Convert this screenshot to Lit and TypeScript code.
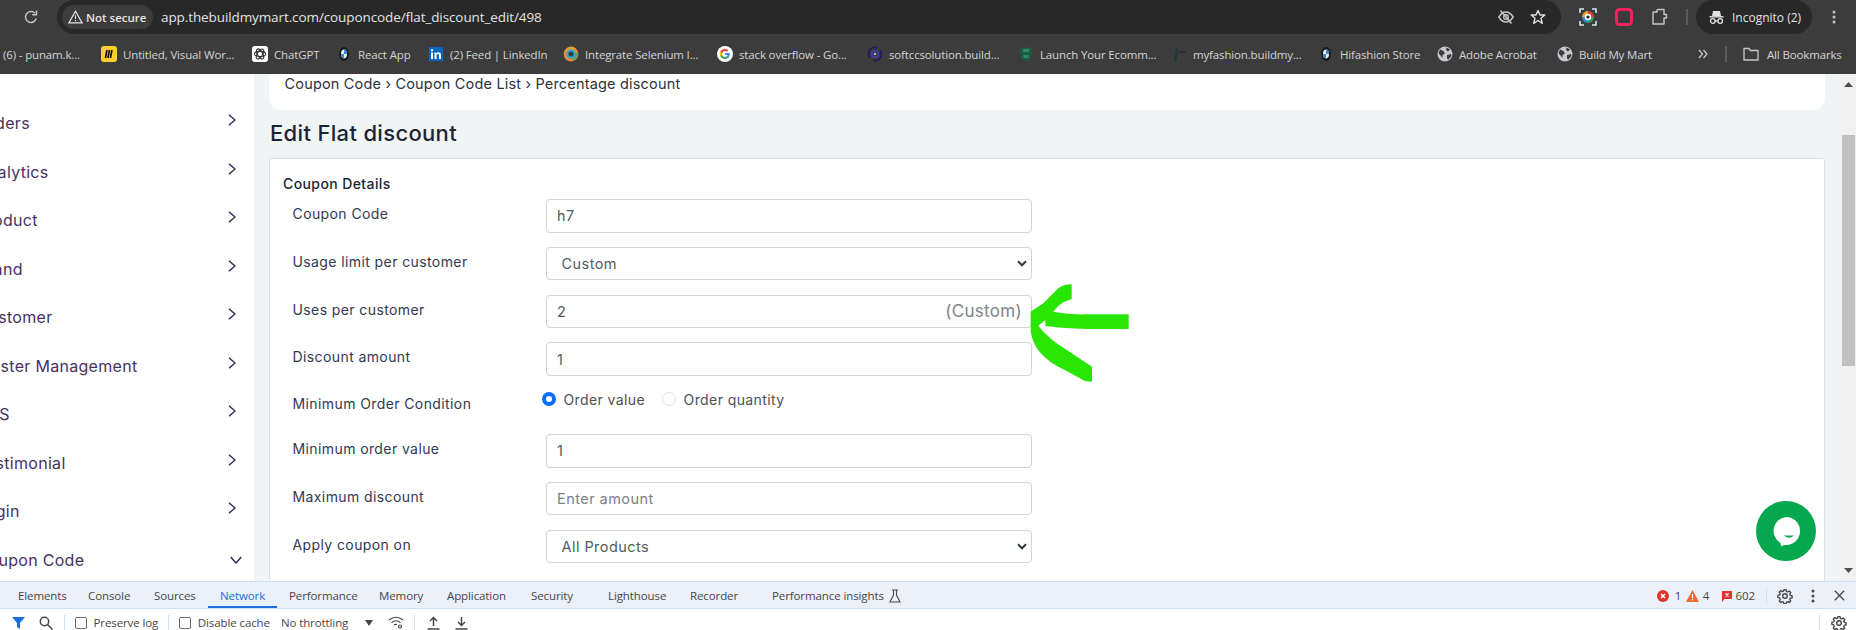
import { LitElement, css, html, svg } from "lit";
import { customElement } from "lit/decorators.js";

const BOOKMARKS = [
  { icon: "none", label: "(6) - punam.k...", w: 101 },
  { icon: "miro", label: "Untitled, Visual Wor...", w: 151 },
  { icon: "gpt", label: "ChatGPT", w: 84 },
  { icon: "bmw", label: "React App", w: 92 },
  { icon: "in", label: "(2) Feed | LinkedIn", w: 135 },
  { icon: "lens", label: "Integrate Selenium I...", w: 154 },
  { icon: "google", label: "stack overflow - Go...", w: 150 },
  { icon: "soft", label: "softccsolution.build...", w: 151 },
  { icon: "launch", label: "Launch Your Ecomm...", w: 153 },
  { icon: "fashion", label: "myfashion.buildmy...", w: 147 },
  { icon: "bmw", label: "Hifashion Store", w: 119 },
  { icon: "globe", label: "Adobe Acrobat", w: 120 },
  { icon: "globe", label: "Build My Mart", w: 130 },
];

const MENU = [
  { label: "Orders", shift: 0 },
  { label: "Analytics", shift: 0 },
  { label: "Product", shift: 0 },
  { label: "Brand", shift: 0 },
  { label: "Customer", shift: 0 },
  { label: "Master Management", shift: 0 },
  { label: "CMS", shift: 4 },
  { label: "Testimonial", shift: 0 },
  { label: "Login", shift: 0 },
];

const TABS = [
  { label: "Elements", w: 70 },
  { label: "Console", w: 66 },
  { label: "Sources", w: 66 },
  { label: "Network", w: 69, active: true },
  { label: "Performance", w: 90 },
  { label: "Memory", w: 68 },
  { label: "Application", w: 84 },
  { label: "Security", w: 77 },
  { label: "Lighthouse", w: 82 },
  { label: "Recorder", w: 82 },
];

function favicon(name: string) {
  switch (name) {
    case "miro":
      return html`<svg width="16" height="16" viewBox="0 0 16 16">
        <rect width="16" height="16" rx="3" fill="#ffd02f" />
        <path d="M6 4 4.400 12M8.500 4 6.900 12M11 4 9.400 12" stroke="#111" stroke-width="1.700" fill="none" />
      </svg>`;
    case "gpt":
      return html`<svg width="16" height="16" viewBox="0 0 16 16">
        <rect width="16" height="16" rx="3" fill="#fff" />
        <g fill="none" stroke="#333" stroke-width="1.1">
          <ellipse cx="8" cy="8" rx="5.6" ry="2.6" />
          <ellipse cx="8" cy="8" rx="5.6" ry="2.6" transform="rotate(60 8 8)" />
          <ellipse cx="8" cy="8" rx="5.6" ry="2.6" transform="rotate(120 8 8)" />
        </g>
      </svg>`;
    case "bmw":
      return html`<svg width="16" height="16" viewBox="0 0 16 16">
        <ellipse cx="8" cy="8" rx="4.8" ry="7" fill="#15181c" />
        <ellipse cx="8" cy="8" rx="3" ry="4.4" fill="#e8eef4" />
        <path d="M8 3.6A3 4.4 0 0 1 11 8H8ZM8 12.4A3 4.4 0 0 1 5 8H8Z" fill="#3f86c9" />
      </svg>`;
    case "in":
      return html`<svg width="16" height="16" viewBox="0 0 16 16">
        <rect x="1" y="1" width="14" height="14" fill="#0a66c2" />
        <path d="M3 6.4h2V13H3ZM3 3.2h2v2H3ZM6.5 6.4h1.9v1c.5-.8 1.2-1.2 2.2-1.2 1.6 0 2.4 1 2.4 2.8v4h-2V9.400c0-1-.3-1.500-1.100-1.500s-1.400.6-1.400 1.600V13h-2Z" fill="#fff" />
      </svg>`;
    case "lens":
      return html`<svg width="16" height="16" viewBox="0 0 16 16" fill="none">
        <circle cx="8" cy="8" r="7.400" fill="#e9893a" />
        <path d="M2 5A7 7 0 0 1 13 2.500L8 8Z" fill="#d9a13a" />
        <path d="M14.800 6.500A7 7 0 0 1 10 14.600L8 8Z" fill="#5aa469" />
        <circle cx="8" cy="8" r="4.600" fill="#2ba6c9" />
        <circle cx="8" cy="8" r="2.500" fill="#32394a" />
      </svg>`;
    case "google":
      return html`<svg width="16" height="16" viewBox="0 0 16 16">
        <circle cx="8" cy="8" r="8" fill="#fff" />
        <path d="M12.800 8.100c0-.4 0-.7-.1-1H8v1.900h2.700c-.1.600-.5 1.200-1 1.500v1.300h1.600c1-.9 1.500-2.200 1.500-3.700Z" fill="#4285f4" />
        <path d="M8 13c1.300 0 2.400-.4 3.300-1.200l-1.600-1.300c-.4.300-1 .5-1.700.5-1.300 0-2.400-.9-2.800-2H3.200v1.300A5 5 0 0 0 8 13Z" fill="#34a853" />
        <path d="M5.200 9c-.2-.6-.2-1.300 0-2V5.700H3.200a5 5 0 0 0 0 4.600Z" fill="#fbbc05" />
        <path d="M8 5c.7 0 1.400.3 1.900.7l1.400-1.400A5 5 0 0 0 3.200 5.700L5.200 7c.4-1.200 1.500-2 2.800-2Z" fill="#ea4335" />
      </svg>`;
    case "soft":
      return html`<svg width="16" height="16" viewBox="0 0 16 16" fill="none">
        <path d="M3 12A6.500 6.500 0 0 1 10 1.800M13 4A6.500 6.500 0 0 1 6 14.200" stroke="#231a63" stroke-width="1.800" />
        <circle cx="8" cy="8" r="3.200" stroke="#3a3fa8" stroke-width="1.600" />
        <circle cx="8" cy="8" r="1.100" fill="#c9cde8" />
      </svg>`;
    case "launch":
      return html`<svg width="16" height="16" viewBox="0 0 16 16">
        <path d="M3 1.500h10l2 3.500-2 3v4.500L8 15l-5-2.500V8L1 5Z" fill="#1f5a45" />
        <path d="M5 3h6v3H5ZM5.500 9h5v3h-5Z" fill="#2f8a66" />
      </svg>`;
    case "fashion":
      return html`<svg width="16" height="16" viewBox="0 0 16 16">
        <path d="M3 15 5 2l1.500 1L5.500 15Z" fill="#15393c" />
        <path d="M7 5h8v2H7Z" fill="#2b2f30" />
      </svg>`;
    case "globe":
      return html`<svg width="16" height="16" viewBox="0 0 16 16">
        <circle cx="8" cy="8" r="7.500" fill="#c7c9cc" />
        <path d="M3 3.500 6.500 5 8 7.500 5.500 9 5.500 12 3 9 1.500 7ZM9.500 1.500 13 3.500 11 5.500 9 4ZM10 9l4-1 .5 2-3.500 4-1-2Z" fill="#3c3c3c" />
      </svg>`;
    default:
      return null;
  }
}

const chevronRight = html`<svg class="chev" width="8" height="12" viewBox="0 0 8 12" fill="none">
  <path d="M1 .7 7 6 1 11.300" stroke="#3b2a57" stroke-width="1.500" />
</svg>`;

const selectArrow = html`<svg class="select-arrow" width="10" height="7" viewBox="0 0 10 7" fill="none">
  <path d="M1 1.300 5 5.300 9 1.300" stroke="#343a40" stroke-width="2" />
</svg>`;

const gear = (c: string) => svg`<svg width="16" height="16" viewBox="0 0 16 16" fill="none">
  <circle cx="8" cy="8" r="2.300" stroke=${c} stroke-width="1.400" />
  <path d="M6.800 1h2.400l.4 2 1.400.6 1.700-1.100 1.700 1.700-1.100 1.700.6 1.400 2 .4v2.400l-2 .4-.6 1.400 1.100 1.700-1.700 1.700-1.700-1.100-1.400.6-.4 2H6.800l-.4-2-1.400-.6-1.700 1.100-1.700-1.700 1.100-1.700L2.100 10l-2-.4V7.200l2-.4.6-1.400-1.100-1.700 1.700-1.700 1.700 1.100 1.400-.6Z" transform="translate(.8 .8) scale(.9)" stroke=${c} stroke-width="1.500" stroke-linejoin="round" />
</svg>`;

@customElement("app-root")
export class AppRoot extends LitElement {
  static styles = css`
    :host {
      display: flex;
      flex-direction: column;
      width: 1856px;
      height: 630px;
      overflow: hidden;
      font-family: "Inter", "Liberation Sans", sans-serif;
      background: #fff;
    }

    /* browser chrome */
    .toolbar {
      display: flex;
      align-items: center;
      height: 34px;
      flex: none;
      background: #3c3c3c;
      font-family: "Open Sans", "Liberation Sans", sans-serif;
    }
    .reload {
      margin-left: 23px;
      margin-right: 18px;
    }
    .omnibox {
      display: flex;
      align-items: center;
      width: 1504px;
      height: 34px;
      flex: none;
      box-sizing: border-box;
      padding: 0 15px 0 5px;
      background: #282828;
      border-radius: 17px;
    }
    .chip {
      display: flex;
      align-items: center;
      gap: 3px;
      width: 91px;
      height: 24px;
      box-sizing: border-box;
      padding-left: 6px;
      background: #3c3c3c;
      border-radius: 12px;
      color: #e6e6e6;
      font-size: 11.500px;
      font-weight: 600;
      white-space: nowrap;
    }
    .url {
      margin-left: 8px;
      color: #e3e3e3;
      font-size: 13.500px;
      letter-spacing: -0.1px;
      flex: 1;
    }
    .omni-icons {
      display: flex;
      gap: 16px;
    }
    .ext {
      display: flex;
      align-items: center;
      gap: 18px;
      margin-left: 18px;
    }
    .tool-sep {
      width: 2px;
      height: 16px;
      margin-left: 17px;
      background: #5c5c5c;
    }
    .pill {
      display: flex;
      align-items: center;
      gap: 7px;
      width: 116px;
      height: 34px;
      box-sizing: border-box;
      margin-left: 8px;
      padding-left: 12px;
      background: #282828;
      border-radius: 17px;
      color: #e3e3e3;
      font-size: 12px;
      white-space: nowrap;
    }
    .menu-dots {
      margin-left: 20px;
    }

    .bookmarks {
      display: flex;
      align-items: center;
      height: 40px;
      flex: none;
      background: #3c3c3c;
      color: #d2d4d6;
      font-family: "Open Sans", "Liberation Sans", sans-serif;
      font-size: 11.500px;
      letter-spacing: -0.15px;
      white-space: nowrap;
    }
    .bm {
      display: flex;
      align-items: center;
      gap: 6px;
      flex: none;
    }
    .bm.first {
      padding-left: 3px;
      box-sizing: border-box;
    }
    .bm-more {
      margin-left: 11px;
    }
    .bm-sep {
      width: 2px;
      height: 16px;
      margin-left: 17px;
      background: #5c5c5c;
    }
    .bm-all {
      display: flex;
      align-items: center;
      gap: 8px;
      margin-left: 16px;
    }

    /* page */
    .main {
      position: relative;
      flex: 1;
      display: flex;
      min-height: 0;
      overflow: hidden;
      background: #f0f4f5;
    }
    .sidebar {
      width: 254px;
      flex: none;
      background: #fff;
      padding-top: 25px;
      box-sizing: border-box;
      overflow: hidden;
      color: #46325f;
      font-size: 16px;
      letter-spacing: 0.3px;
    }
    .item {
      display: flex;
      align-items: center;
      justify-content: space-between;
      height: 48.500px;
      margin-left: -23.500px;
      padding-right: 18px;
      white-space: nowrap;
    }
    .chev {
      margin-bottom: 6px;
    }
    .chev-down {
      margin-right: -6px;
    }
    .content {
      flex: 1;
      min-width: 0;
      padding: 0 15px;
    }
    .crumb {
      display: flex;
      align-items: center;
      height: 36px;
      box-sizing: border-box;
      padding: 0 15.500px 17px;
      background: #fff;
      border-radius: 0 0 12px 12px;
      color: #2b3240;
      font-size: 14.500px;
      letter-spacing: 0.18px;
      white-space: pre;
    }
    .title {
      margin: 11px 0 12.500px 1px;
      color: #1c2434;
      font-size: 22px;
      font-weight: 500;
      line-height: 24px;
      letter-spacing: 0.33px;
    }
    .card {
      height: 500px;
      box-sizing: border-box;
      padding: 15px 13px 0;
      background: #fff;
      border: 1px solid #dde3e3;
      border-radius: 3px;
    }
    .card-head {
      margin-bottom: 5.500px;
      color: #1c2434;
      font-size: 14px;
      font-weight: 500;
      line-height: 20px;
      letter-spacing: 0.4px;
    }
    .row {
      display: flex;
      align-items: flex-start;
      height: 47.750px;
      padding-left: 9.500px;
    }
    .row.radios {
      height: 44px;
    }
    .label {
      width: 253.500px;
      flex: none;
      padding-top: 5px;
      color: #2f3a52;
      font-size: 14px;
      line-height: 20px;
      letter-spacing: 0.4px;
      white-space: nowrap;
    }
    .radios .label {
      padding-top: 4px;
    }
    .field {
      position: relative;
      width: 486px;
      height: 33.500px;
    }
    .field input,
    .field select {
      display: block;
      width: 100%;
      height: 100%;
      box-sizing: border-box;
      margin: 0;
      background: #fff;
      border: 1px solid #ced4da;
      border-radius: 4px;
      color: #555a61;
      font: inherit;
      font-size: 14.500px;
      letter-spacing: 0.45px;
      outline: none;
    }
    .field input {
      padding: 0 10px;
    }
    .field input::placeholder {
      color: #7b8088;
      opacity: 1;
    }
    .field select {
      appearance: none;
      padding: 0 0 0 14.500px;
    }
    .select-arrow {
      position: absolute;
      top: 13px;
      right: 5px;
    }
    .suffix {
      position: absolute;
      top: 5px;
      right: 10px;
      color: #80858c;
      font-size: 17px;
      line-height: 22px;
      letter-spacing: 0.3px;
    }
    .radio-group {
      display: flex;
      align-items: center;
      height: 20px;
      margin: -1px 0 0 -4px;
      color: #4a4f57;
      font-size: 14px;
      letter-spacing: 0.4px;
    }
    .radio {
      width: 14px;
      height: 14px;
      flex: none;
      box-sizing: border-box;
      margin-right: 7.500px;
      border: 1px solid #dfe2e5;
      border-radius: 50%;
    }
    .radio.on {
      border: 4px solid #0d6efd;
    }
    .radio-gap {
      margin-left: 17px;
    }
    .track {
      display: flex;
      flex-direction: column;
      align-items: center;
      width: 16px;
      flex: none;
      padding-top: 8px;
      box-sizing: border-box;
      background: #f1f1f1;
    }
    .thumb {
      width: 13px;
      height: 231px;
      margin-top: 48px;
      margin-left: 1px;
      background: #c1c1c1;
    }
    .track-down {
      margin-top: auto;
      margin-bottom: 8px;
    }
    .arrow {
      position: absolute;
      left: 1020px;
      top: 201px;
    }
    .chat {
      position: absolute;
      right: 40px;
      bottom: 20px;
      width: 60px;
      height: 60px;
      display: flex;
      align-items: center;
      justify-content: center;
      background: #06a84f;
      border-radius: 50%;
    }

    /* devtools */
    .devtools {
      flex: none;
      height: 49px;
      overflow: hidden;
      color: #474747;
      font-family: "Open Sans", "Liberation Sans", sans-serif;
      font-size: 11.500px;
      letter-spacing: -0.1px;
    }
    .tabs {
      display: flex;
      align-items: stretch;
      height: 28px;
      box-sizing: border-box;
      padding-left: 6px;
      background: #ebf0f9;
      border-top: 1px solid #d0dff5;
      border-bottom: 1px solid #d0dff5;
    }
    .tab {
      display: flex;
      align-items: center;
      flex: none;
      box-sizing: border-box;
      padding: 1px 0 0 12px;
      white-space: nowrap;
    }
    .tab.active {
      color: #1a6fdb;
      box-shadow: inset 0 -2px 0 #1a6fdb;
    }
    .flask {
      margin-left: 5px;
    }
    .status {
      display: flex;
      align-items: center;
      margin-left: auto;
      padding: 1px 11.500px 0 0;
    }
    .dev-sep {
      width: 1px;
      height: 16px;
      background: #d0dff5;
    }
    .filters {
      display: flex;
      align-items: center;
      height: 27px;
      background: #fff;
      white-space: nowrap;
    }
    .check {
      width: 12px;
      height: 12px;
      flex: none;
      box-sizing: border-box;
      margin-right: 6.500px;
      border: 1px solid #6e6e6e;
      border-radius: 2px;
    }
  `;

  render() {
    return html`
      ${this.renderToolbar()} ${this.renderBookmarks()}
      <div class="main">
        ${this.renderSidebar()}
        <div class="content">
          <div class="crumb">Coupon Code › Coupon Code List › Percentage discount</div>
          <div class="title">Edit Flat discount</div>
          ${this.renderForm()}
        </div>
        <div class="track">
          <svg width="9" height="5" viewBox="0 0 9 5"><path d="M4.500 0 9 5H0Z" fill="#505050" /></svg>
          <div class="thumb"></div>
          <svg class="track-down" width="9" height="5" viewBox="0 0 9 5"><path d="M4.500 5 9 0H0Z" fill="#505050" /></svg>
        </div>
        <svg class="arrow" width="130" height="115" viewBox="0 0 390 345">
          <path
            d="M155 28V72L130 82Q112 92 100 110L130 115Q160 119 200 118H326V162H200Q130 160 76 153V135L55 152Q72 175 110 205L216 275V320L195 318 130 283Q85 262 60 232 38 205 32 170V110L70 85 115 40Q130 28 155 28Z"
            fill="#29e600"
          />
        </svg>
        <div class="chat">
          <svg width="30" height="30" viewBox="0 0 30 30">
            <path d="M15 1A14 14 0 0 1 15 29Q12 29 10 30.500L9.500 27A14 14 0 0 1 15 1Z" fill="#fff" />
            <path d="M13 19.500H23Q18 24 13 19.500Z" fill="#06a84f" />
          </svg>
        </div>
      </div>
      ${this.renderDevtools()}
    `;
  }

  private renderToolbar() {
    return html`
      <div class="toolbar">
        <svg class="reload" width="16" height="16" viewBox="0 0 16 16" fill="none">
          <path d="M13.300 9.500A5.500 5.500 0 1 1 12 4.200" stroke="#c7c7c7" stroke-width="1.400" />
          <path d="M13.500 1.500V5.800H9.200" stroke="#c7c7c7" stroke-width="1.400" />
        </svg>
        <div class="omnibox">
          <div class="chip">
            <svg width="15" height="14" viewBox="0 0 15 14" fill="none">
              <path d="M7.500 1.300 14 12.800H1Z" stroke="#e6e6e6" stroke-width="1.200" />
              <path d="M7.500 5.200V9M7.500 10V11.200" stroke="#e6e6e6" stroke-width="1.100" />
            </svg>
            Not secure
          </div>
          <div class="url">app.thebuildmymart.com/couponcode/flat_discount_edit/498</div>
          <div class="omni-icons">
            <svg width="16" height="16" viewBox="0 0 16 16" fill="none" stroke="#c7c7c7" stroke-width="1.400">
              <path d="M.8 8Q4 3 8 3T15.200 8Q12 13 8 13T.8 8Z" />
              <circle cx="8" cy="8" r="2.300" />
              <path d="M2.500 1.500 13.500 14.500" />
            </svg>
            <svg width="16" height="16" viewBox="0 0 16 16" fill="none" stroke="#e0e0e0" stroke-width="1.400">
              <path d="M8 1.500 10 6H14.800L11 9.200 12.300 14.300 8 11.500 3.700 14.300 5 9.200 1.200 6H6Z" stroke-linejoin="round" />
            </svg>
          </div>
        </div>
        <div class="ext">
          <svg width="18" height="18" viewBox="0 0 18 18" fill="none">
            <path d="M1 5V1H5M13 1H17V5M17 13V17H13M5 17H1V13" stroke="#cfe9ee" stroke-width="1.600" />
            <path d="M9 3A6 6 0 0 1 15 9H9Z" fill="#e23b3b" />
            <path d="M15 9A6 6 0 0 1 9 15V9Z" fill="#2f9e5b" />
            <path d="M9 15A6 6 0 0 1 3 9H9Z" fill="#2b8fd8" />
            <path d="M3 9A6 6 0 0 1 9 3V9Z" fill="#f2a33a" />
            <circle cx="9" cy="9" r="3.200" fill="#fff" />
            <circle cx="9" cy="9" r="1.600" fill="#222" />
          </svg>
          <svg width="18" height="18" viewBox="0 0 18 18" fill="none">
            <rect x="1.500" y="1.500" width="15" height="15" rx="3" stroke="#f5215f" stroke-width="3" />
          </svg>
          <svg width="18" height="18" viewBox="0 0 18 18" fill="none" stroke="#c7c7c7" stroke-width="1.400">
            <path d="M2 4H6V2.500Q6 1.500 7 1.500H13V6.500H15.500V10H13V16H2Z" stroke-linejoin="round" />
          </svg>
        </div>
        <div class="tool-sep"></div>
        <div class="pill">
          <svg width="17" height="16" viewBox="0 0 17 16" fill="none">
            <path d="M5 2H12L13 7H4Z" fill="#e3e3e3" />
            <path d="M1.500 7.800H15.500" stroke="#e3e3e3" stroke-width="1.400" />
            <circle cx="4.800" cy="12" r="2.300" stroke="#e3e3e3" stroke-width="1.300" />
            <circle cx="12.200" cy="12" r="2.300" stroke="#e3e3e3" stroke-width="1.300" />
            <path d="M7 12H10" stroke="#e3e3e3" stroke-width="1.300" />
          </svg>
          Incognito (2)
        </div>
        <svg class="menu-dots" width="4" height="14" viewBox="0 0 4 14" fill="#c7c7c7">
          <circle cx="2" cy="2" r="1.500" />
          <circle cx="2" cy="7" r="1.500" />
          <circle cx="2" cy="12" r="1.500" />
        </svg>
      </div>
    `;
  }

  private renderBookmarks() {
    return html`
      <div class="bookmarks">
        ${BOOKMARKS.map(
          (b, i) => html`<div class="bm ${i === 0 ? "first" : ""}" style="width:${b.w}px">
            ${favicon(b.icon)}<span>${b.label}</span>
          </div>`,
        )}
        <svg class="bm-more" width="10" height="10" viewBox="0 0 10 10" fill="none" stroke="#c7c7c7" stroke-width="1.300">
          <path d="M1 1 4.500 5 1 9M5.500 1 9 5 5.500 9" />
        </svg>
        <div class="bm-sep"></div>
        <div class="bm-all">
          <svg width="16" height="14" viewBox="0 0 16 14" fill="none" stroke="#c7c7c7" stroke-width="1.300">
            <path d="M1 1.500H6L7.500 3.500H15V13H1Z" />
          </svg>
          All Bookmarks
        </div>
      </div>
    `;
  }

  private renderSidebar() {
    return html`
      <div class="sidebar">
        ${MENU.map(
          (m) => html`<div class="item"><span style="margin-left:${-m.shift}px">${m.label}</span>${chevronRight}</div>`,
        )}
        <div class="item">
          Coupon Code
          <svg class="chev-down" width="12" height="8" viewBox="0 0 12 8" fill="none">
            <path d="M.7 1 6 7 11.300 1" stroke="#3b2a57" stroke-width="1.500" />
          </svg>
        </div>
      </div>
    `;
  }

  private renderForm() {
    return html`
      <div class="card">
        <div class="card-head">Coupon Details</div>
        <div class="row">
          <div class="label">Coupon Code</div>
          <div class="field"><input value="h7" /></div>
        </div>
        <div class="row">
          <div class="label">Usage limit per customer</div>
          <div class="field"><select><option>Custom</option></select>${selectArrow}</div>
        </div>
        <div class="row">
          <div class="label">Uses per customer</div>
          <div class="field"><input value="2" /><span class="suffix">(Custom)</span></div>
        </div>
        <div class="row">
          <div class="label">Discount amount</div>
          <div class="field"><input value="1" /></div>
        </div>
        <div class="row radios">
          <div class="label">Minimum Order Condition</div>
          <div class="radio-group">
            <span class="radio on"></span>Order value
            <span class="radio radio-gap"></span>Order quantity
          </div>
        </div>
        <div class="row">
          <div class="label">Minimum order value</div>
          <div class="field"><input value="1" /></div>
        </div>
        <div class="row">
          <div class="label">Maximum discount</div>
          <div class="field"><input placeholder="Enter amount" /></div>
        </div>
        <div class="row">
          <div class="label">Apply coupon on</div>
          <div class="field"><select><option>All Products</option></select>${selectArrow}</div>
        </div>
      </div>
    `;
  }

  private renderDevtools() {
    return html`
      <div class="devtools">
        <div class="tabs">
          ${TABS.map(
            (t) => html`<div class="tab ${t.active ? "active" : ""}" style="width:${t.w}px">${t.label}</div>`,
          )}
          <div class="tab">
            Performance insights
            <svg class="flask" width="12" height="14" viewBox="0 0 12 14" fill="none" stroke="#474747" stroke-width="1.100">
              <path d="M3 1H9M4.500 1V6L1 13H11L7.500 6V1" />
            </svg>
          </div>
          <div class="status">
            <svg width="12" height="12" viewBox="0 0 12 12">
              <circle cx="6" cy="6" r="6" fill="#dc362e" />
              <path d="M4 4 8 8M8 4 4 8" stroke="#fff" stroke-width="1.500" />
            </svg>
            <span style="margin-left:6px">1</span>
            <svg style="margin-left:5px" width="13" height="12" viewBox="0 0 13 12">
              <path d="M6.500 0 13 12H0Z" fill="#f06a28" />
              <path d="M6.500 4V8M6.500 9V10.500" stroke="#fff" stroke-width="1.200" />
            </svg>
            <span style="margin-left:3.500px">4</span>
            <svg style="margin-left:11.400px" width="12" height="12" viewBox="0 0 12 12">
              <path d="M1 1H11V9H3.500L1 12Z" fill="#dc362e" />
              <path d="M4.500 3.500 7.500 6.500M7.500 3.500 4.500 6.500" stroke="#fff" stroke-width="1.200" />
            </svg>
            <span style="margin-left:3px">602</span>
            <div class="dev-sep" style="margin-left:11px"></div>
            <span style="margin-left:10px;display:flex">${gear("#474747")}</span>
            <svg style="margin-left:18px" width="4" height="14" viewBox="0 0 4 14" fill="#474747">
              <circle cx="2" cy="2" r="1.500" />
              <circle cx="2" cy="7" r="1.500" />
              <circle cx="2" cy="12" r="1.500" />
            </svg>
            <svg style="margin-left:18.500px" width="11" height="11" viewBox="0 0 11 11" fill="none" stroke="#474747" stroke-width="1.300">
              <path d="M.8.8 10.200 10.200M10.200.8.8 10.200" />
            </svg>
          </div>
        </div>
        <div class="filters">
          <svg style="margin-left:12px" width="13" height="13" viewBox="0 0 13 13"><path d="M0 1H13L8 7V13L5 11V7Z" fill="#1a6fdb" /></svg>
          <svg style="margin-left:14px" width="14" height="14" viewBox="0 0 14 14" fill="none" stroke="#474747" stroke-width="1.500">
            <circle cx="5.500" cy="5.500" r="4.200" /><path d="M8.500 8.500 13.500 13.500" />
          </svg>
          <div class="dev-sep" style="margin-left:11px"></div>
          <span class="check" style="margin-left:10px"></span>Preserve log
          <div class="dev-sep" style="margin-left:10px"></div>
          <span class="check" style="margin-left:10px"></span>Disable cache
          <span style="margin-left:11px">No throttling</span>
          <svg style="margin-left:17px" width="8" height="6" viewBox="0 0 8 6"><path d="M0 0H8L4 6Z" fill="#474747" /></svg>
          <svg style="margin-left:15px" width="16" height="13" viewBox="0 0 16 13" fill="none" stroke="#474747" stroke-width="1.200">
            <path d="M1 4Q8-1.500 15 4M3.500 6.500Q8 3 12.500 6.500M6 9Q7.500 8 9 8.500" />
            <circle cx="12" cy="10.500" r="1.500" />
          </svg>
          <div class="dev-sep" style="margin-left:10px"></div>
          <svg style="margin-left:12px" width="13" height="14" viewBox="0 0 13 14" fill="none" stroke="#474747" stroke-width="1.500">
            <path d="M6.500 10V1.500M3 5 6.500 1.500 10 5M.5 13H12.500" />
          </svg>
          <svg style="margin-left:15px" width="13" height="14" viewBox="0 0 13 14" fill="none" stroke="#474747" stroke-width="1.500">
            <path d="M6.500 1V9.500M3 6 6.500 9.500 10 6M.5 13H12.500" />
          </svg>
          <div style="margin-left:auto;display:flex;align-items:center;padding-right:9px">
            <div class="dev-sep"></div>
            <span style="margin-left:11px;display:flex">${gear("#474747")}</span>
          </div>
        </div>
      </div>
    `;
  }
}
